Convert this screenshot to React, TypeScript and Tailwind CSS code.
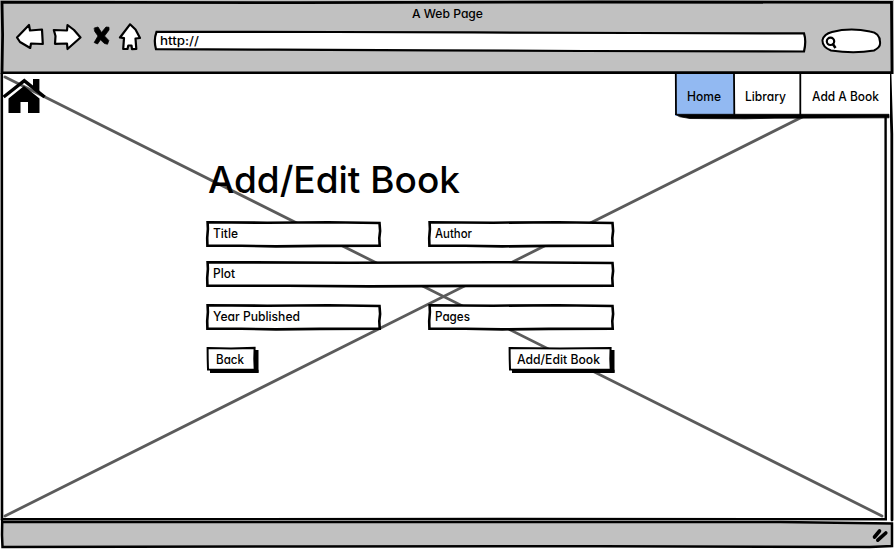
import React from "react";

const textFont =
  "font-['Inter','Lato',sans-serif] [font-feature-settings:'cv11'] font-medium whitespace-nowrap leading-none text-black";

function Outline({ d, width = 2.6, fill = "none" }: { d: string; width?: number; fill?: string }) {
  return (
    <svg
      className="pointer-events-none absolute inset-0 h-full w-full overflow-visible"
      fill={fill}
      stroke="#000"
      strokeWidth={width}
      strokeLinejoin="miter"
      strokeLinecap="round"
      aria-hidden="true"
    >
      <path d={d} />
    </svg>
  );
}

function Label({ children, width, size = 12.5 }: { children: string; width: number; size?: number }) {
  return (
    <svg width={width} height={size * 1.4} className="relative block shrink-0 overflow-visible">
      <text x={0} y={size} fontSize={size} textLength={width} lengthAdjust="spacingAndGlyphs" className={textFont}>
        {children}
      </text>
    </svg>
  );
}

function Field({ label, labelWidth, wide, narrow }: { label: string; labelWidth: number; wide?: boolean; narrow?: boolean }) {
  const size = wide ? "w-[408px]" : narrow ? "w-[175px]" : "w-[186px]";
  const w = wide ? 408 : narrow ? 175 : 186;
  const d = `M1.6 1.2 L${w * 0.35} 1.7 L${w * 0.7} 1.2 L${w - 1.5} 2 L${w - 0.9} 10 L${w - 1.7} 17 L${w - 1.3} 24.8 L${w * 0.65} 24.9 L${w * 0.4} 25.4 L${w * 0.2} 24.8 L1.4 24.6 L1.2 17 L1.9 8 Z`;
  return (
    <div className={`relative flex h-[26px] items-center pl-[7px] ${size}`}>
      <Outline d={d} fill="#fff" />
      <Label width={labelWidth}>{label}</Label>
    </div>
  );
}

function Action({ label, labelWidth, wide }: { label: string; labelWidth: number; wide?: boolean }) {
  const w = wide ? 104 : 50;
  return (
    <button className={`relative flex h-[24px] items-center justify-center pr-[3px] pt-px ${wide ? "w-[104px]" : "w-[50px]"}`}>
      <Outline d={`M4 22 H${w - 2} V3 H${w + 2.5} V26 H4 Z`} width={0} fill="#000" />
      <Outline d={`M1.6 1 L${w * 0.5} 1.5 L${w - 1.4} .9 L${w - 1.7} 12 L${w - 1.3} 22.4 L${w * 0.6} 22.8 L2 22.5 L1.7 12 Z`} width={2} fill="#fff" />
      <svg className="absolute inset-0 h-full w-full overflow-visible" aria-hidden="true">
        <path d={`M4 22.8 H${w + 2.5} V25.8 H4 Z M${w - 1} 3 H${w + 2} V25.8 H${w - 1} Z`} />
      </svg>
      <Label width={labelWidth}>{label}</Label>
    </button>
  );
}

function Toolbar() {
  return (
    <header className="relative h-[74px] w-full shrink-0 bg-[#c1c1c1]">
      <Outline d="M2 2.2 L300 2.6 L600 2 L891.5 2.4 L892 72.5 L600 72.7 L300 72.8 L2 72.8 L2.6 35 Z" width={2.8} />
      <div className="relative flex h-[23px] justify-center pt-[6px]">
        <Label width={71} size={12}>A Web Page</Label>
      </div>
      <div className="relative flex h-[32px] items-start pl-[15px]">
        <svg width="139" height="32" viewBox="15 23 139 32" fill="#fff" stroke="#000" strokeWidth="2.2" strokeLinejoin="round" strokeLinecap="round" className="shrink-0">
          <path d="M17 37.5 L29 25 L30 30.5 L42 29.5 L42.8 44 L31 43.5 L30.2 48 L20 42 Z" />
          <path d="M53.8 30 L67 30.5 L67.5 25 L74 30 L80.5 37.5 L67.5 49 L67 43.5 L55 43.8 L55.5 36 Z" />
          <path d="M94.5 28 L98 27 L101.5 32.5 L106 27 L109 27.3 L109 30 L104.5 36 L108.8 40.5 L107.5 44.2 L104.5 43.5 L100.5 39.8 L97.5 44 L94.2 42.5 L98 36 L94.8 31.5 Z" fill="#000" strokeWidth=".8" />
          <path d="M130 24.3 L120 37.5 L124 38.2 L123.2 49 L127.5 49 L128.3 45.5 L131.5 45.5 L132 49.2 L136.3 49 L135.5 38.5 L140 38 L135.5 29.5 Z" />
        </svg>
        <div className="relative mt-[7px] flex h-[22px] w-[652px] items-center pl-[6px]">
          <Outline d="M2.5 1.8 L180 2 L320 2.4 L480 3 L650 3.4 Q652.5 11 650 21.5 L430 21 L280 20.3 L120 19.7 L2 19.2 Q-.6 10 2.5 1.8Z" width={2.2} fill="#fff" />
          <Label width={39} size={12}>http://</Label>
        </div>
        <svg width="62" height="30" viewBox="820 25 62 30" fill="#fff" stroke="#000" strokeWidth="2" className="ml-[14px] mt-[2px] shrink-0">
          <path d="M832 32 Q850 27.5 870 31.5 Q880 33 880 42 Q881 47 874 50.5 Q854 54 831 50.5 Q822 47 822.5 40 Q824 34 832 32 Z" />
          <circle cx="830.5" cy="41.3" r="3.7" strokeWidth="2.2" />
          <path d="M832.5 43.5 L835.5 48" strokeWidth="2.5" />
        </svg>
      </div>
    </header>
  );
}

function Navigation() {
  return (
    <nav className="relative flex h-[42px] w-[215px] bg-white">
      <div className="flex w-[59px] items-center justify-center bg-[#92b9f2] pr-[2px] pt-[3px]">
        <Label width={34}>Home</Label>
      </div>
      <div className="flex w-[66px] items-center justify-center pr-[3px] pt-[3px]">
        <Label width={41}>Library</Label>
      </div>
      <div className="flex w-[90px] items-center justify-center pl-px pt-[3px]">
        <Label width={67}>Add A Book</Label>
      </div>
      <Outline d="M.8 0 L1 40 M59 0 L59.3 40 M125.3 0 L125.3 42" width={1.8} />
      <Outline d="M.5 40.3 L214 40.3 L214 43.8 L100 44.2 L70 44.8 L15 44.5 L5 42.8 Z" width={0.8} fill="#000" />
    </nav>
  );
}

function Page() {
  return (
    <main className="relative h-[447px] w-full shrink-0 bg-white">
      <Outline d="M1.8 0 L2 446" width={2.6} />
      <Outline d="M885.6 43 L885.8 445.2 L500 445 L2 445.2" width={2.4} />
      <Outline d="M890 0 L891.8 60 L892 446" width={2.8} />
      <svg className="absolute inset-0 h-full w-full" viewBox="0 74 894 447" stroke="#5b5b5b" strokeWidth="2.8" strokeLinecap="round">
        <path d="M5 77 L882 516 M5 516 L882 77" />
      </svg>
      <div className="relative flex h-[82px] items-start justify-between pl-[3px] pr-[4px]">
        <svg width="43" height="37" viewBox="3 78 43 37" className="mt-[4px] overflow-visible">
          <path d="M8.5 113 V98.5 L24 86 L39.5 98.5 V113 H28 V102 H20.5 V113 Z" />
          <path d="M3.6 97 L24.3 80.6 L44.6 97" fill="none" stroke="#000" strokeWidth="3.4" />
          <path d="M33 79 H39.4 V94 L33 89 Z" />
        </svg>
        <Navigation />
      </div>
      <form className="relative ml-[206px] w-[408px]" onSubmit={(e) => e.preventDefault()}>
        <h1 className="h-[65px] pl-[2px]">
          <Label width={252} size={37}>Add/Edit Book</Label>
        </h1>
        <div className="flex justify-between">
          <Field label="Title" labelWidth={25} narrow />
          <Field label="Author" labelWidth={37} />
        </div>
        <div className="mt-[14px]">
          <Field label="Plot" labelWidth={22} wide />
        </div>
        <div className="mt-[17px] flex justify-between">
          <Field label="Year Published" labelWidth={87} narrow />
          <Field label="Pages" labelWidth={35} />
        </div>
        <div className="mt-[17px] flex justify-between pr-[2px]">
          <Action label="Back" labelWidth={28} />
          <Action label="Add/Edit Book" labelWidth={83} wide />
        </div>
      </form>
    </main>
  );
}

export default function App() {
  return (
    <div className="flex h-[549px] w-[894px] flex-col overflow-hidden bg-white">
      <Toolbar />
      <Page />
      <footer className="relative flex h-[28px] w-full items-center justify-end pr-[3px]">
        <Outline d="M2.2 1 L400 1 L780 1 L892 2.4 L892 25 L870 26 L600 25.2 L300 25.4 L2.5 26 L2 14 Z" width={2.5} fill="#c1c1c1" />
        <svg width="20" height="18" viewBox="871 527 20 18" className="relative" stroke="#000" strokeWidth="3.6" strokeLinecap="round">
          <path d="M874.5 538 L879.5 532 M877.8 541.2 L885.8 534" />
        </svg>
      </footer>
    </div>
  );
}
